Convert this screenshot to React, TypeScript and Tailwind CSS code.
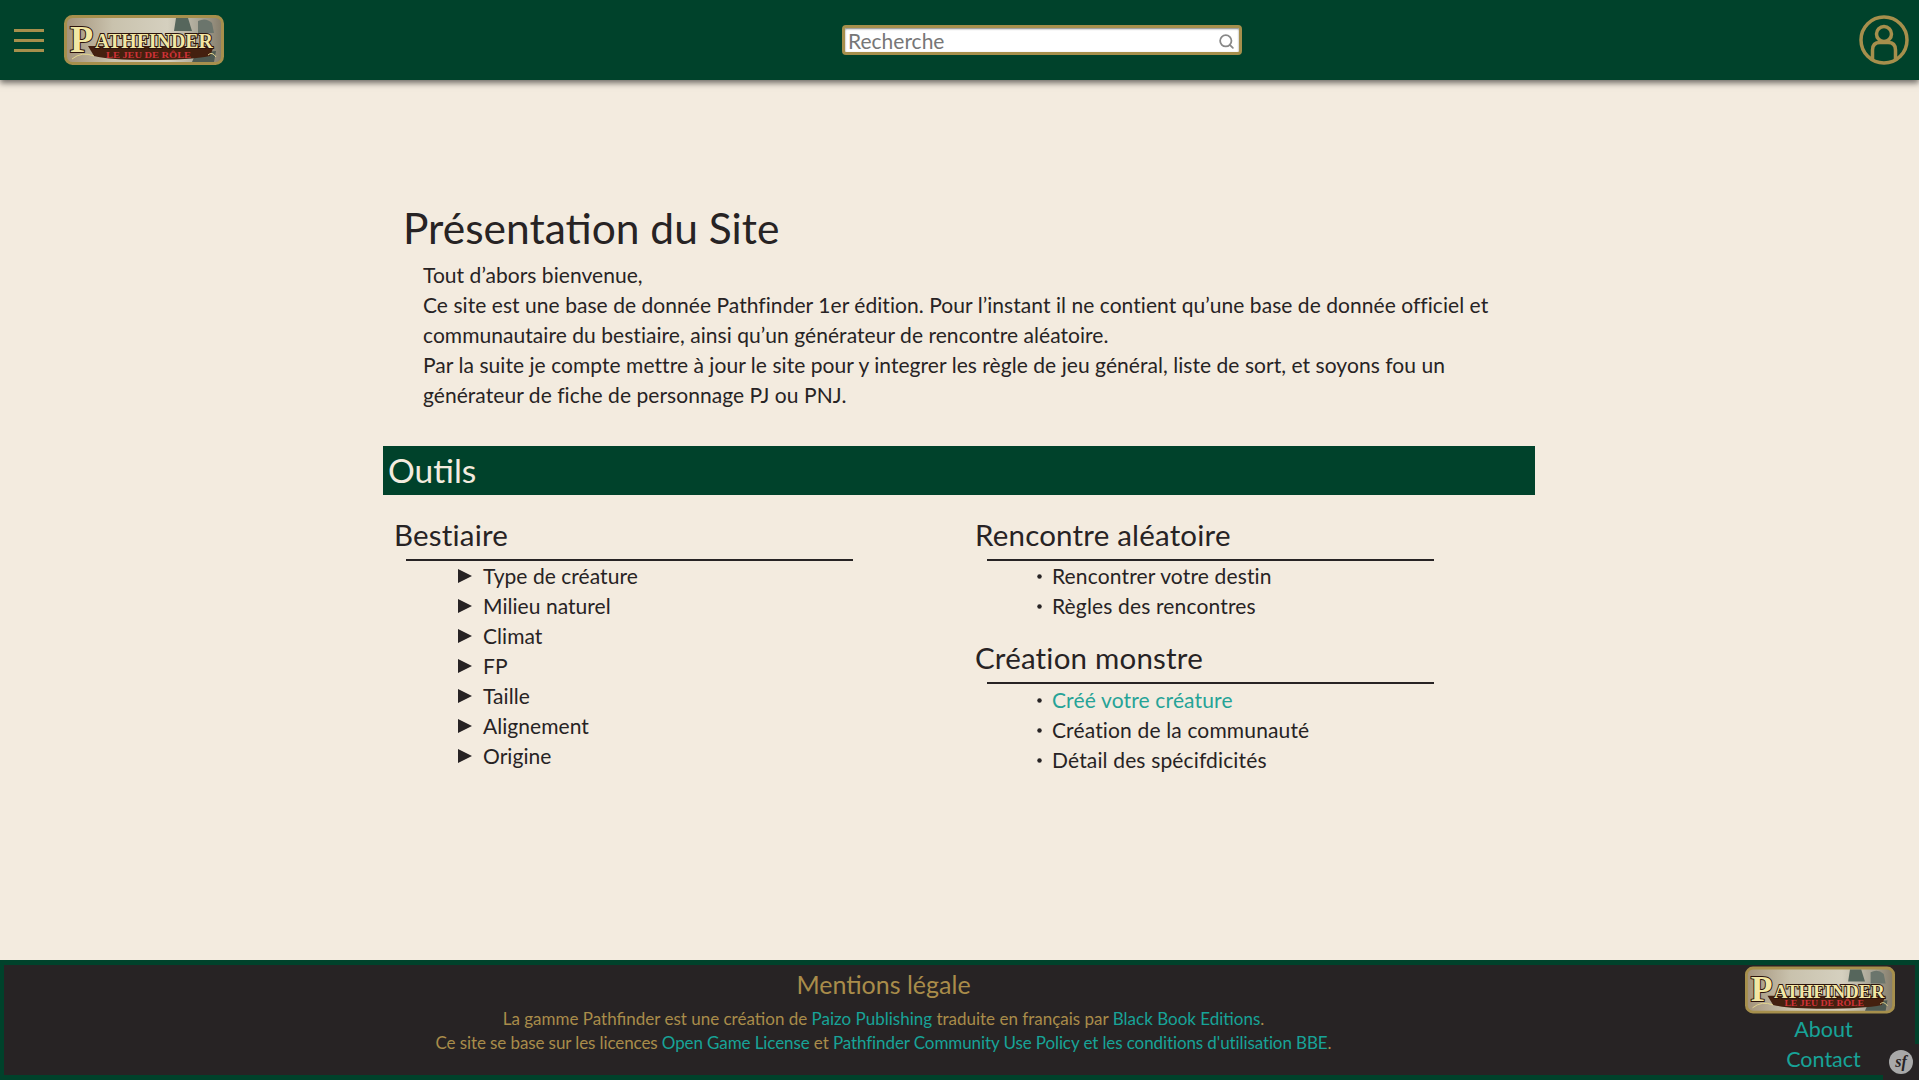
import { Search } from 'lucide-react';

const Logo = ({ className }: { className: string }) => (
  <svg viewBox="0 0 160 50" className={className}>
    <defs>
      <linearGradient id="logoBg" x1="0" x2="1" y1="0" y2="0">
        <stop offset="0" stopColor="#a3927a" />
        <stop offset="0.3" stopColor="#c9c2ad" />
        <stop offset="0.65" stopColor="#d5d0bf" />
        <stop offset="0.85" stopColor="#a9a596" />
        <stop offset="1" stopColor="#857c6a" />
      </linearGradient>
    </defs>
    <rect x="1.5" y="1.5" width="157" height="47" rx="7" fill="url(#logoBg)" stroke="#a68f4c" strokeWidth="3" />
    {/* figures behind the title */}
    <path d="M112 3 H124 L128 16 H110 Z" fill="#56665c" />
    <path d="M134 6 Q142 2 148 8 L150 18 H134 Z" fill="#6b756c" />
    <path d="M132 38 L152 36 L150 47 H128 Z" fill="#4e5a52" />
    {/* brown banner */}
    <path d="M24 31 H150 L146 41 Q126 45 84 45 Q46 45 30 41 Z" fill="#44200f" />
    <path d="M8 44 Q18 36 30 41 M152 42 Q148 36 144 40" fill="none" stroke="#e3d58e" strokeWidth="1" />
    <text x="6" y="37" fontFamily="'Liberation Serif', serif" fontWeight="700" fontSize="38" fill="#f2e7a4" stroke="#2c130c" strokeWidth="2" paintOrder="stroke">P</text>
    <text x="31" y="33" fontFamily="'Liberation Serif', serif" fontWeight="700" fontSize="20" textLength="118" lengthAdjust="spacingAndGlyphs" fill="#f2e7a4" stroke="#2c130c" strokeWidth="2" paintOrder="stroke">ATHFINDER</text>
    <text x="42" y="42.5" fontFamily="'Liberation Serif', serif" fontWeight="700" fontSize="8.5" textLength="85" lengthAdjust="spacingAndGlyphs" fill="#cf3238">LE JEU DE RÔLE</text>
  </svg>
);

const UserIcon = () => (
  <svg viewBox="0 0 50 50" className="w-[50px] h-[50px]" fill="none" stroke="#a68f4c" strokeWidth="3.5">
    <circle cx="25" cy="25" r="23" />
    <circle cx="25" cy="19" r="7.5" />
    <path d="M13.5 44 V35 Q13.5 27.5 21 27.5 H29 Q36.5 27.5 36.5 35 V44" />
  </svg>
);

const bestiaire = ['Type de créature', 'Milieu naturel', 'Climat', 'FP', 'Taille', 'Alignement', 'Origine'];

const ToolHeading = ({ children }: { children: string }) => (
  <>
    <h3 className="text-[29.5px] leading-[36px] pl-[11px] tracking-[0.2px]">{children}</h3>
    <div className="ml-[23px] w-[447px] h-[2px] bg-[#272324] mt-[6px]"></div>
  </>
);

const BulletList = ({ items }: { items: { label: string; active?: boolean }[] }) => (
  <ul className="pl-[73px]">
    {items.map(item => (
      <li key={item.label} className="flex items-center h-[30px] text-[21px] tracking-[0.15px]">
        <span className="w-[5px] h-[5px] rounded-full bg-[#272324] mr-[10px] scale-90"></span>
        <span className={item.active ? 'text-[#26a397]' : ''}>{item.label}</span>
      </li>
    ))}
  </ul>
);

export default function App() {
  return (
    <div className="h-[1080px] flex flex-col bg-[#f3ebdf] text-[#272324] font-['Lato',sans-serif] overflow-hidden">
      {/* Top bar */}
      <header className="relative z-10 h-[80px] shrink-0 bg-[#00422b] shadow-[0_3px_6px_rgba(0,0,0,0.55)] flex items-center justify-between pl-[14px] pr-[10px]">
        <div className="flex items-center gap-[20px]">
          <div className="w-[30px] flex flex-col gap-[7px]">
            <div className="h-[3px] bg-[#a68f4c]"></div>
            <div className="h-[3px] bg-[#a68f4c]"></div>
            <div className="h-[3px] bg-[#a68f4c]"></div>
          </div>
          <Logo className="w-[160px] h-[50px]" />
        </div>
        <div className="w-[400px] h-[30px] ml-[1px] flex items-center bg-white border-[3px] border-[#a68f4c] rounded-[4px] shadow-[inset_0_1px_2px_rgba(0,0,0,0.5)]">
          <input
            placeholder="Recherche"
            className="flex-1 min-w-0 h-full px-[3px] bg-transparent text-[21px] outline-none placeholder:text-[#777777]"
          />
          <Search className="w-[17px] h-[17px] mr-[4px] mt-[3px] text-[#888888]" strokeWidth={2.5} />
        </div>
        <UserIcon />
      </header>

      <main className="flex-1 w-[1152px] ml-[383px] pt-[122px]">
        <h1 className="text-[42.5px] leading-[52px] pl-[20px]">Présentation du Site</h1>
        <p className="pl-[40px] pr-[40px] text-[21px] leading-[30px] mt-[6px] tracking-[0.05px]">
          Tout d’abors bienvenue,
          <br />
          Ce site est une base de donnée Pathfinder 1er édition. Pour l’instant il ne contient qu’une base de donnée officiel et communautaire du bestiaire, ainsi qu’un générateur de rencontre aléatoire.
          <br />
          Par la suite je compte mettre à jour le site pour y integrer les règle de jeu général, liste de sort, et soyons fou un générateur de fiche de personnage PJ ou PNJ.
        </p>

        <h2 className="mt-[36px] h-[49px] bg-[#00422b] text-[#f3ebdf] text-[33.5px] leading-[49px] pl-[5px]">Outils</h2>

        <div className="grid grid-cols-2 mt-[22px]">
          <div className="pr-[2px]">
            <ToolHeading>Bestiaire</ToolHeading>
            <ul className="pl-[75px]">
              {bestiaire.map(label => (
                <li key={label} className="flex items-center h-[30px] text-[21px] tracking-[0.05px]">
                  <svg viewBox="0 0 14 14" className="w-[14px] h-[14px] mr-[11px]">
                    <path d="M0 0 L14 7 L0 14 Z" fill="#272324" />
                  </svg>
                  {label}
                </li>
              ))}
            </ul>
          </div>
          <div className="ml-[5px]">
            <ToolHeading>Rencontre aléatoire</ToolHeading>
            <BulletList items={[{ label: 'Rencontrer votre destin' }, { label: 'Règles des rencontres' }]} />
            <div className="mt-[19px]">
              <ToolHeading>Création monstre</ToolHeading>
            </div>
            <div className="pt-[1px]">
              <BulletList
                items={[
                  { label: 'Créé votre créature', active: true },
                  { label: 'Création de la communauté' },
                  { label: 'Détail des spécifdicités' },
                ]}
              />
            </div>
          </div>
        </div>
      </main>

      {/* Footer */}
      <footer className="relative h-[120px] shrink-0 bg-[#272324] border-y-[5px] border-x-[4px] border-[#00422b] flex text-[#a98c4a]">
        <div className="flex-1 text-center pl-[18px]">
          <div className="text-[25px] leading-[36px] mt-[1px]">Mentions légale</div>
          <div className="text-[17px] leading-[24px] mt-[5px]">
            La gamme Pathfinder est une création de <span className="text-[#17a398]">Paizo Publishing</span> traduite en français par <span className="text-[#17a398]">Black Book Editions</span>.
            <br />
            <span className="tracking-[-0.1px]">
              Ce site se base sur les licences <span className="text-[#17a398]">Open Game License</span> et <span className="text-[#17a398]">Pathfinder Community Use Policy et les conditions d'utilisation BBE</span>.
            </span>
          </div>
        </div>
        <div className="w-[150px] mr-[20px] flex flex-col items-center text-[21.5px] leading-[30px] text-[#17a398]">
          <Logo className="w-[150px] h-[48px] mt-[1px]" />
          <a className="pl-[7px]">About</a>
          <a className="pl-[7px]">Contact</a>
        </div>
        <div className="absolute -right-[4px] -bottom-[5px] w-[36px] h-[36px] bg-[#272324] flex items-center justify-center">
          <div className="w-[24px] h-[24px] rounded-full bg-[#a8a8a8] flex items-center justify-center text-[#272324] text-[16px] italic font-['Liberation_Serif',serif] font-bold leading-none">
            sf
          </div>
        </div>
      </footer>
    </div>
  );
}
